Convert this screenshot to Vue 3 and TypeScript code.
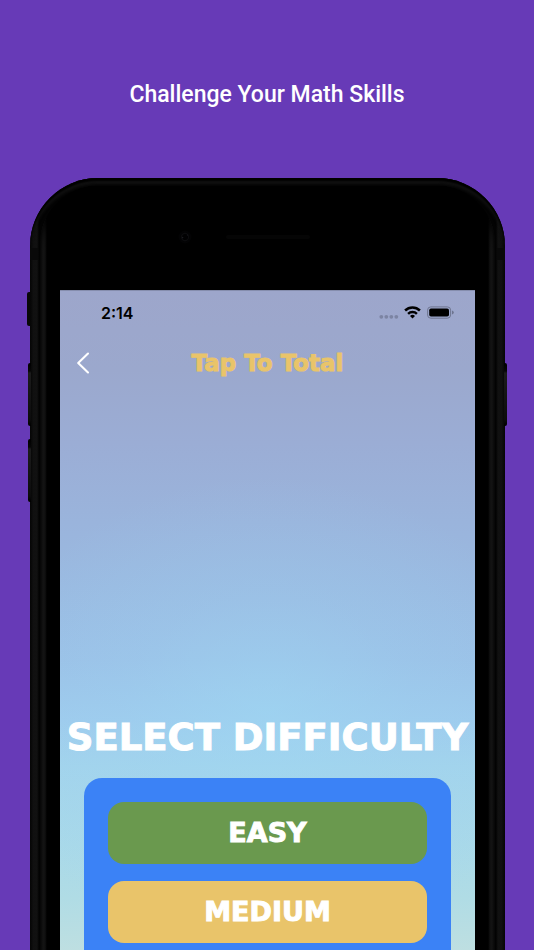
<script setup lang="ts">
interface Level {
  id: string
  label: string
}

const levels: Level[] = [
  { id: 'easy', label: 'EASY' },
  { id: 'medium', label: 'MEDIUM' },
]
const signalDots = [3, 8, 13, 18]
</script>

<template>
  <div class="poster">
    <h1 class="headline">Challenge Your Math Skills</h1>

    <div class="phone">
      <span class="key mute"></span>
      <span class="key volume-up"></span>
      <span class="key volume-down"></span>
      <span class="key power"></span>
      <span class="band band-left"></span>
      <span class="band band-right"></span>

      <div class="face">
        <div class="forehead">
          <svg class="camera" viewBox="0 0 14 14" aria-hidden="true">
            <circle cx="7" cy="7" r="6.5" fill="#030304" />
            <circle cx="7" cy="7" r="3.6" fill="#010102" stroke="#0b0b0d" stroke-width="1.2" />
            <circle cx="4.6" cy="7.6" r="0.8" fill="#1c1c20" />
            <circle cx="9.4" cy="5" r="0.6" fill="#1c1c20" />
          </svg>
          <span class="speaker"></span>
        </div>

        <div class="screen">
          <div class="status">
            <time class="clock">2:14</time>
            <svg class="status-icons" viewBox="0 0 76 16" aria-hidden="true">
              <circle v-for="x in signalDots" :key="x" :cx="x + 0.3" cy="11.8" r="1.9" fill="#7c84a3" />
              <g fill="none" stroke="#000" stroke-width="2.5">
                <path d="M27.1 5.5a10.6 10.6 0 0 1 14.8 0" />
                <path d="M30.1 8.8a6.3 6.3 0 0 1 8.8 0" />
              </g>
              <path d="M32 10.9a3.6 3.6 0 0 1 5 0L34.5 13.4z" fill="#000" />
              <rect x="49.6" y="1.9" width="23" height="11.3" rx="3.2" fill="none" stroke="#6e7590" stroke-width="1" />
              <rect x="51.2" y="3.5" width="19.8" height="8.1" rx="1.8" fill="#000" />
              <path d="M74 5.5q1.8.5 1.8 2t-1.8 2z" fill="#6e7590" />
            </svg>
          </div>

          <header class="bar">
            <button class="back" type="button" aria-label="Back">
              <svg viewBox="0 0 14 24" aria-hidden="true">
                <path d="M12 2.5L2.2 12L12 21.5" fill="none" stroke="#fff" stroke-width="2.1" stroke-linecap="round" stroke-linejoin="round" />
              </svg>
            </button>
            <h2 class="title">Tap To Total</h2>
          </header>

          <main class="content">
            <h3 class="prompt">SELECT DIFFICULTY</h3>
            <div class="panel">
              <button v-for="level in levels" :key="level.id" type="button" class="level" :class="level.id">
                {{ level.label }}
              </button>
            </div>
          </main>
        </div>
      </div>
    </div>
  </div>
</template>

<style>
body {
  margin: 0;
  background: #673ab7;
}
</style>

<style scoped>
.poster {
  box-sizing: border-box;
  display: flex;
  flex-direction: column;
  height: 100vh;
  overflow: hidden;
  background: #673ab7;
  font-family: "DejaVu Sans", sans-serif;
}
.headline {
  flex: none;
  margin: 0;
  padding: 79px 16px 67px;
  color: #fff;
  font: 500 23px/32px Roboto, sans-serif;
  text-align: center;
}
.phone {
  position: relative;
  flex: 1 0 auto;
  display: flex;
  margin: 0 29px 0 30px;
  padding: 8px 10px 0;
  border-radius: 68px 68px 0 0;
  background: linear-gradient(90deg, #050505 0, #101010 3px, #111 7px, #030303 9px, #030303 calc(100% - 9px), #111 calc(100% - 7px), #101010 calc(100% - 3px), #050505 100%);
  box-shadow: inset 0 3px 2px #000, inset 0 6px 3px #121212;
}
.key {
  position: absolute;
  width: 3px;
  background: linear-gradient(#000 0, #070707 8px, #1c1c1c 10px, #0c0c0c calc(100% - 6px), #000 100%);
}
.mute {
  top: 114px;
  left: -3px;
  height: 34px;
  background: #080808;
  border-radius: 2px 0 0 2px;
}
.volume-up,
.volume-down {
  left: -2px;
  height: 63px;
  border-radius: 2px 0 0 2px;
}
.volume-up {
  top: 185px;
}
.volume-down {
  top: 261px;
}
.power {
  top: 185px;
  right: -2px;
  height: 63px;
  border-radius: 0 2px 2px 0;
}
.band {
  position: absolute;
  top: 70px;
  width: 8px;
  height: 12px;
  background: #090909;
}
.band-left {
  left: 0;
}
.band-right {
  right: 0;
}
.face {
  position: relative;
  flex: 1;
  min-width: 0;
  display: flex;
  flex-direction: column;
  padding: 0 20px;
  border-radius: 58px 58px 0 0;
  background: linear-gradient(90deg, #0d0d0d 0, #1b1b1b 3px, #131313 5px, #000 7px, #000 calc(100% - 7px), #131313 calc(100% - 5px), #1b1b1b calc(100% - 3px), #0d0d0d 100%);
  box-shadow: inset 0 8px 10px #000;
}
.forehead {
  box-sizing: border-box;
  display: grid;
  grid-template-columns: 1fr 84px 1fr;
  align-items: center;
  height: 104px;
  margin: 0 -13px;
  padding-bottom: 2px;
  border-radius: 51px 51px 0 0;
  background: #000;
}
.camera {
  justify-self: end;
  width: 14px;
  height: 14px;
  margin-right: 34px;
}
.speaker {
  height: 4px;
  border-radius: 2px;
  background: #050505;
}
.screen {
  flex: 1;
  display: flex;
  flex-direction: column;
  border-top: 1px solid #858dad;
  background:
    radial-gradient(ellipse 70% 36% at 50% 64%, rgba(158, 216, 243, 0.55), rgba(157, 210, 241, 0.25) 50%, rgba(157, 210, 241, 0) 100%),
    linear-gradient(#9da6cb 0, #9ba8cd 12%, #9badd5 23%, #9ab4dc 35%, #9abae1 45%, #9bc1e7 56%, #9ecbed 65%, #a3d4ec 72%, #a9d9e9 84%, #b0dce5 92%, #bedfe1 100%);
}
.status {
  display: flex;
  align-items: center;
  justify-content: space-between;
  height: 44px;
  padding: 0 21px 0 41px;
}
.clock {
  color: #000;
  font: 600 16px/20px Inter, sans-serif;
}
.status-icons {
  width: 76px;
  height: 16px;
}
.bar {
  display: grid;
  grid-template-columns: 48px 1fr 48px;
  align-items: center;
  height: 56px;
}
.back {
  display: flex;
  align-items: center;
  height: 44px;
  margin: 0;
  padding: 0 0 0 16px;
  border: 0;
  background: none;
}
.back svg {
  width: 14px;
  height: 24px;
}
.title {
  margin: 0;
  color: #e9c46a;
  font-size: 23px;
  line-height: 32px;
  font-weight: 700;
  text-align: center;
  white-space: nowrap;
  -webkit-text-stroke: 1px #e9c46a;
}
.content {
  flex: 1;
  display: flex;
  flex-direction: column;
  padding: 323px 24px 0;
}
.prompt {
  margin: 0 -24px 16px;
  color: #fff;
  font-size: 37px;
  line-height: 48px;
  font-weight: 700;
  text-align: center;
  white-space: nowrap;
  -webkit-text-stroke: 1px #fff;
}
.panel {
  flex: 1;
  display: flex;
  flex-direction: column;
  gap: 17px;
  padding: 24px 24px 8px;
  border-radius: 18px 18px 0 0;
  background: #3b82f6;
}
.level {
  height: 62px;
  padding: 0;
  border: 0;
  border-radius: 16px;
  color: #fff;
  font: 700 27px/32px "DejaVu Sans", sans-serif;
  -webkit-text-stroke: 1px #fff;
}
.easy {
  background: #6a994e;
}
.medium {
  background: #e9c46a;
}
</style>
